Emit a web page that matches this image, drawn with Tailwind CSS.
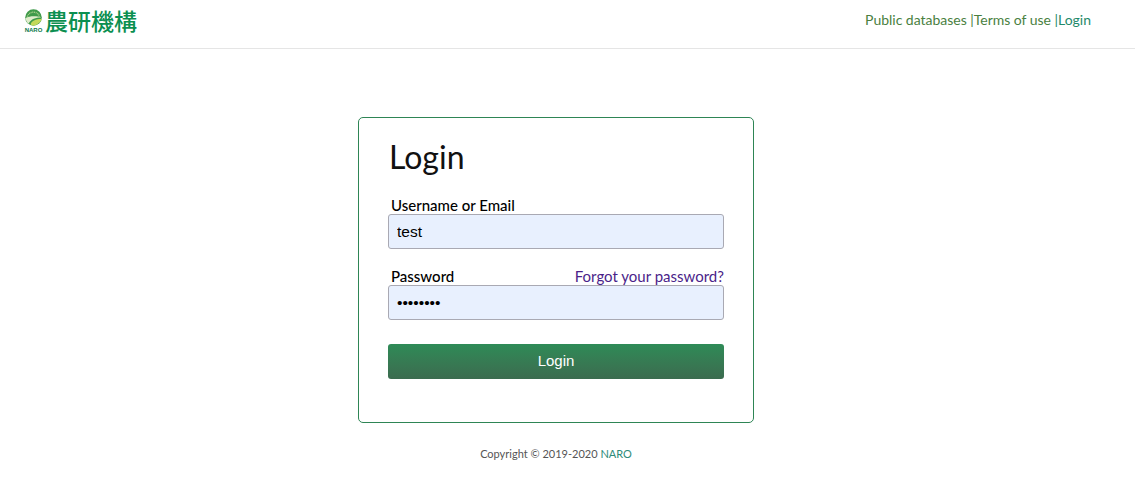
<!DOCTYPE html>
<html lang="en">
<head>
    <meta charset="UTF-8">
    <meta name="viewport" content="width=device-width, initial-scale=1.0">
    <title>Login - NARO</title>
    <script src="https://cdn.jsdelivr.net/npm/@tailwindcss/browser@4"></script>
</head>
<body class="bg-white font-['Lato','Open_Sans',sans-serif] overflow-hidden">
    <nav class="h-[49px] border-b border-[#e5e5e5] flex justify-between items-start pl-[24px] pr-[44px]">
        <div class="flex items-start h-[40px] pt-[9px]">
            <svg class="w-[19px] h-[24px]" viewBox="0 0 19 24" xmlns="http://www.w3.org/2000/svg">
                <circle cx="9.5" cy="8.5" r="8.3" fill="#3f9a4a"/>
                <path d="M3.4 7.6C4.4 4.6 6.8 3.2 9.5 3.2C12.2 3.2 14.6 4.6 15.6 7.6" fill="none" stroke="#a9cf8a" stroke-width="1.4" stroke-dasharray="1 .7"/>
                <path d="M1.4 9C6 6.6 13 6.6 17.7 8.6C13 8.4 7 9.6 4.6 14.8C3 13.4 1.8 11.4 1.4 9Z" fill="#dfeccb"/>
                <path d="M6.6 15.6C7 12 11.6 10 17.8 10C16.6 13.6 12.6 16.4 9 16.8C8.2 16.6 7.4 16.2 6.6 15.6Z" fill="#c4d95a"/>
                <text x="9.5" y="23.2" text-anchor="middle" font-size="6" font-weight="700" fill="#0d7a4a" font-family="Liberation Sans">NARO</text>
            </svg>
            <span class="ml-[2px] text-[23px] leading-[23px] font-medium text-[#0b8f50] font-['Noto_Sans_CJK_JP',sans-serif]">農研機構</span>
        </div>
        <div class="flex mt-[11px] text-[14px] tracking-[-0.02px] leading-[18px] text-[#2f7a4f]">
            <a href="#" class="text-[#4a7f3f]">Public databases&nbsp;</a>
            <span class="text-[#4a7f3f]">|</span>
            <a href="#" class="text-[#4a7f3f]">Terms of use&nbsp;</a>
            <span class="text-[#1f8a6a]">|</span>
            <a href="#" class="text-[#1f8a6a]">Login</a>
        </div>
    </nav>

    <main class="flex flex-col items-center pt-[68px] pr-[23px]">
        <div class="w-[396px] h-[306px] border border-[#2e8555] rounded-[5px] pt-[19px] px-[29px]">
            <h1 class="text-[32px] leading-[40px] text-[#111] ml-[1px]">Login</h1>
            <form class="mt-[19px]">
                <label class="block ml-[3px] text-[15px] leading-[18px] font-medium text-black">Username or Email</label>
                <input type="text" value="test" class="block w-full h-[35px] px-[8px] bg-[#e8f0fe] border border-[#a9a9b3] rounded-[3px] text-[15.5px] text-black font-['Liberation_Sans',sans-serif]">
                <div class="flex justify-between items-end mt-[18px] h-[18px]">
                    <label class="ml-[3px] text-[15px] leading-[18px] font-medium text-black">Password</label>
                    <a href="#" class="text-[15px] leading-[18px] text-[#4b1f8a]">Forgot your password?</a>
                </div>
                <input type="password" value="password" class="block w-full h-[35px] px-[8px] bg-[#e8f0fe] border border-[#a9a9b3] rounded-[3px] text-[15.5px] text-black font-['Liberation_Sans',sans-serif]">
                <button type="button" class="block w-full h-[35px] mt-[24px] rounded-[3px] bg-gradient-to-b from-[#2e8b57] to-[#3b6b4f] text-white text-[15px] font-['Liberation_Sans',sans-serif]">Login</button>
            </form>
        </div>
        <p class="mt-[24px] text-[11px] leading-[14px] text-[#555]">Copyright © 2019-2020 <a href="#" class="text-[#2e8b7a]">NARO</a></p>
    </main>
</body>
</html>
